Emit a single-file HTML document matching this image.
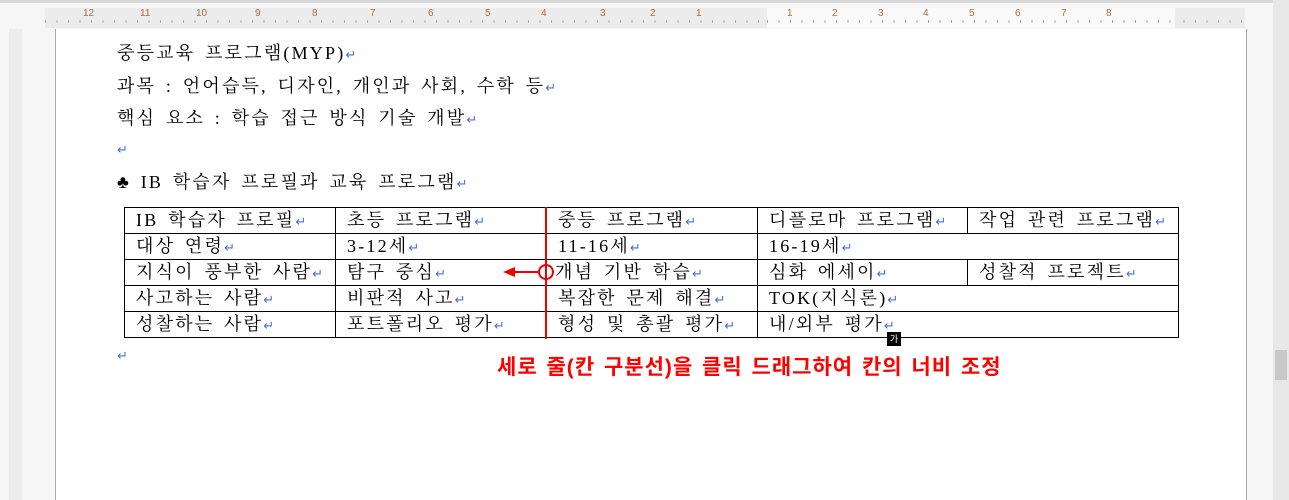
<!DOCTYPE html><html><head><meta charset="utf-8"><style>
*{margin:0;padding:0;box-sizing:border-box}
body{width:1289px;height:500px;overflow:hidden;background:#f6f6f6;position:relative;font-family:"Liberation Serif","Noto Serif CJK SC",serif;}
.topbar{position:absolute;left:0;top:0;width:1289px;height:3px;background:#d8d8d8}
.hr{position:absolute;left:45px;top:8px;width:1200px;height:20px;background:#ececec;background-image:repeating-linear-gradient(90deg,#aaa 0 1px,transparent 1px 11.5px);background-size:100% 3px;background-repeat:no-repeat;background-position:0 12px}
.hrw{position:absolute;left:767px;top:8px;width:408px;height:20px;background:#fafafa;background-image:repeating-linear-gradient(90deg,#aaa 0 1px,transparent 1px 11.5px);background-size:100% 3px;background-repeat:no-repeat;background-position:0 12px}
.num{position:absolute;top:8px;font:10px "Liberation Sans",sans-serif;color:#a07050}
.vr{position:absolute;left:9px;top:29px;width:13px;height:471px;background:#ececec}
.page{position:absolute;left:55px;top:29px;width:1192px;height:471px;background:#fff;border-left:1px solid #aaa;border-right:1px solid #aaa}
.sb{position:absolute;left:1273px;top:0;width:16px;height:500px;background:#e8e8e8}
.t{position:absolute;font-size:18px;letter-spacing:2.2px;word-spacing:3px;color:#000;white-space:nowrap}
.r{color:#4a6fd8;font-size:13px;font-family:"DejaVu Sans",sans-serif;letter-spacing:0}
table{position:absolute;left:124px;top:207px;border-collapse:collapse;table-layout:fixed}
td{border:1px solid #000;height:26px;line-height:22px;padding:0 0 0 11px;font-size:18px;letter-spacing:2.2px;word-spacing:3px;white-space:nowrap;vertical-align:middle;overflow:hidden}
td div{height:25px;line-height:25px;overflow:hidden}
</style></head><body>
<div class="topbar"></div>
<div class="hr"></div><div class="hrw"></div>
<div class="num" style="left:83px">12</div><div class="num" style="left:140px">11</div><div class="num" style="left:196px">10</div><div class="num" style="left:255px">9</div><div class="num" style="left:312px">8</div><div class="num" style="left:370px">7</div><div class="num" style="left:428px">6</div><div class="num" style="left:485px">5</div><div class="num" style="left:541px">4</div><div class="num" style="left:600px">3</div><div class="num" style="left:650px">2</div><div class="num" style="left:696px">1</div><div class="num" style="left:787px">1</div><div class="num" style="left:832px">2</div><div class="num" style="left:878px">3</div><div class="num" style="left:923px">4</div><div class="num" style="left:969px">5</div><div class="num" style="left:1015px">6</div><div class="num" style="left:1061px">7</div><div class="num" style="left:1106px">8</div>
<div class="vr"></div>
<div class="page"></div>
<div class="sb"><div style="position:absolute;left:2px;top:350px;width:12px;height:30px;background:#c8c8c8"></div></div>
<div class="t" style="left:117px;top:39px">중등교육 프로그램(MYP)<span class="r">↵</span></div>
<div class="t" style="left:117px;top:72px">과목 : 언어습득, 디자인, 개인과 사회, 수학 등<span class="r">↵</span></div>
<div class="t" style="left:117px;top:104px">핵심 요소 : 학습 접근 방식 기술 개발<span class="r">↵</span></div>
<div class="t" style="left:117px;top:138px"><span class="r">↵</span></div>
<div class="t" style="left:117px;top:168px">♣ IB 학습자 프로필과 교육 프로그램<span class="r">↵</span></div>
<table>
<colgroup><col style="width:211px"><col style="width:211px"><col style="width:211px"><col style="width:210px"><col style="width:211px"></colgroup>
<tr><td><div>IB 학습자 프로필<span class="r">↵</span></div></td><td><div>초등 프로그램<span class="r">↵</span></div></td><td><div>중등 프로그램<span class="r">↵</span></div></td><td><div>디플로마 프로그램<span class="r">↵</span></div></td><td><div>작업 관련 프로그램<span class="r">↵</span></div></td></tr>
<tr><td><div>대상 연령<span class="r">↵</span></div></td><td><div>3-12세<span class="r">↵</span></div></td><td><div>11-16세<span class="r">↵</span></div></td><td colspan="2"><div>16-19세<span class="r">↵</span></div></td></tr>
<tr><td><div>지식이 풍부한 사람<span class="r">↵</span></div></td><td><div>탐구 중심<span class="r">↵</span></div></td><td style="padding-left:8px"><div>개념 기반 학습<span class="r">↵</span></div></td><td><div>심화 에세이<span class="r">↵</span></div></td><td><div>성찰적 프로젝트<span class="r">↵</span></div></td></tr>
<tr><td><div>사고하는 사람<span class="r">↵</span></div></td><td><div>비판적 사고<span class="r">↵</span></div></td><td><div>복잡한 문제 해결<span class="r">↵</span></div></td><td colspan="2"><div>TOK(지식론)<span class="r">↵</span></div></td></tr>
<tr><td><div>성찰하는 사람<span class="r">↵</span></div></td><td><div>포트폴리오 평가<span class="r">↵</span></div></td><td><div>형성 및 총괄 평가<span class="r">↵</span></div></td><td colspan="2"><div>내/외부 평가<span class="r">↵</span></div></td></tr>
</table>
<div style="position:absolute;left:545px;top:207px;width:2px;height:132px;background:#e00"></div>
<svg style="position:absolute;left:495px;top:262px" width="60" height="20"><line x1="18" y1="10" x2="44" y2="10" stroke="#e00" stroke-width="2"/><polygon points="8,10 20,5 20,15" fill="#e00"/><circle cx="51" cy="10" r="7" fill="none" stroke="#e00" stroke-width="2"/></svg>
<div style="position:absolute;left:887px;top:332px;width:14px;height:14px;background:#000;color:#fff;font:9px 'Noto Sans CJK KR',sans-serif;text-align:center;line-height:14px">가</div>
<div class="t" style="left:117px;top:344px"><span class="r">↵</span></div>
<div style="position:absolute;left:497px;top:351px;color:#f00;font:bold 21px 'Liberation Sans','Noto Sans CJK KR',sans-serif;white-space:nowrap;letter-spacing:1px;word-spacing:2px">세로 줄(칸 구분선)을 클릭 드래그하여 칸의 너비 조정</div>
</body></html>
